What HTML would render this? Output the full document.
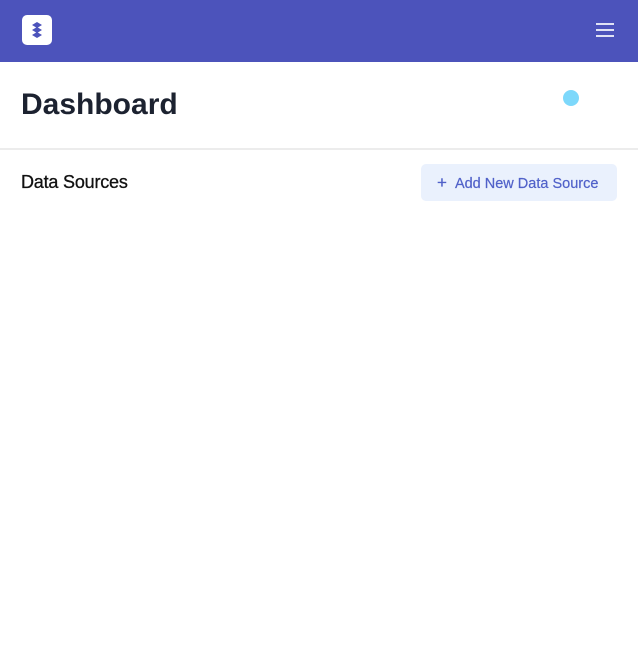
<!DOCTYPE html>
<html><head><style>
*{margin:0;padding:0;box-sizing:border-box}
body{width:638px;height:672px;background:#fff;font-family:"Liberation Sans",sans-serif;position:relative;overflow:hidden}
.nav{position:absolute;left:0;top:0;width:638px;height:62px;background:#4c53bb}
.logo{position:absolute;left:22px;top:15px;width:30px;height:30px;background:#fff;border-radius:5px}
.burger{position:absolute;left:596px;top:23px;width:18px}
.burger i{display:block;height:2px;background:#e0e2f5;margin-bottom:4px}
h1{position:absolute;left:21px;top:88px;font-size:30px;font-weight:bold;color:#1c2230;letter-spacing:0px}
.dot{position:absolute;left:563px;top:90px;width:16px;height:16px;border-radius:50%;background:#7dd8fb}
.hr{position:absolute;left:0;top:148px;width:638px;height:2px;background:#ececec}
.ds{position:absolute;left:21px;top:172px;font-size:18px;color:#111;letter-spacing:-0.2px;-webkit-text-stroke:0.3px #111}
.btn{position:absolute;left:421px;top:164px;width:196px;height:37px;background:#eaf1fd;border-radius:5px;color:#5061c9;font-size:14.5px;line-height:37px;padding-left:16px;-webkit-text-stroke:0.2px #5061c9}
</style></head><body>
<div class="nav"><div class="logo"><svg width="30" height="30" viewBox="0 0 30 30"><g fill="#4c53bb"><path d="M15 7l5 3-5 3-5-3z"/><path d="M15 12l5 3-5 3-5-3z"/><path d="M15 17l5 3-5 3-5-3z"/></g></svg></div>
<div class="burger"><i></i><i></i><i></i></div></div>
<h1>Dashboard</h1><div class="dot"></div><div class="hr"></div>
<div class="ds">Data Sources</div>
<div class="btn"><span style="font-size:17px;margin-right:8px">+</span>Add New Data Source</div>
</body></html>
